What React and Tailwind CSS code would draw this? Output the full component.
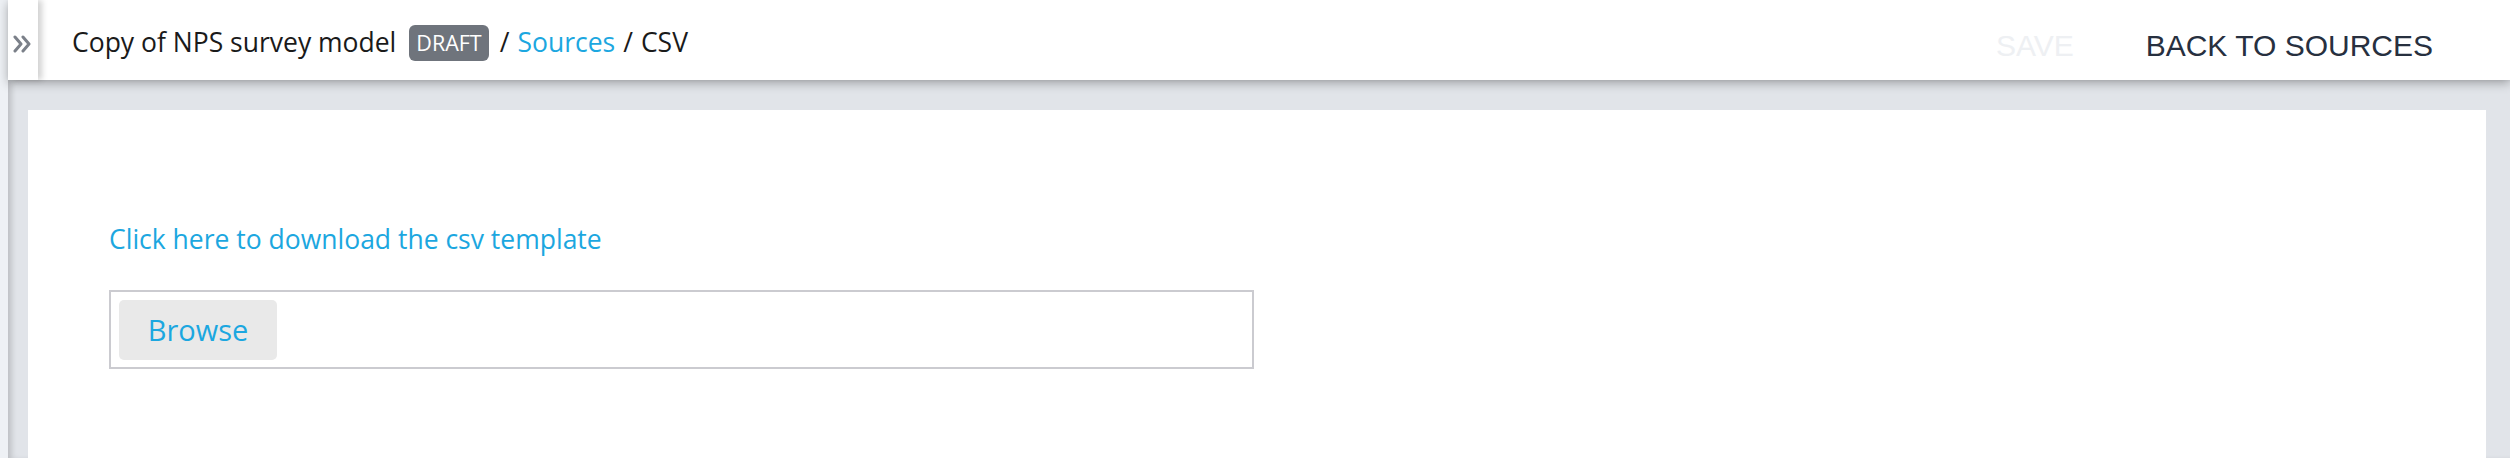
import React from "react";

export default function App() {
  const font = { fontFamily: "'Open Sans', Lato, sans-serif" };
  return (
    <div className="flex w-[2510px] h-[458px] overflow-hidden bg-[#eef1f5]" style={font}>
      <div className="w-[8px] shrink-0 bg-[#eef1f5]" />
      <div className="flex flex-1 flex-col min-w-0">
        <header className="relative z-10 flex h-[80px] shrink-0 items-center bg-white shadow-[0_3px_10px_rgba(0,0,0,0.3)]">
          <div className="relative z-10 flex h-full w-[30px] shrink-0 items-center justify-center bg-white pt-[8px] shadow-[4px_0_6px_rgba(0,0,0,0.18)]">
            <svg width="22" height="18" viewBox="0 0 22 18" fill="none" stroke="#7b8089" strokeWidth="3" strokeLinecap="round" strokeLinejoin="round">
              <polyline points="3,2 9,9 3,16" />
              <polyline points="11,2 17,9 11,16" />
            </svg>
          </div>
          <div className="flex flex-1 items-center pl-[34px] pt-[6px] text-[26.5px] text-[#1a1a1a]">
            <span>Copy of NPS survey model</span>
            <span className="ml-[13px] flex h-[36px] items-center rounded-[6px] bg-[#6f747c] px-[7px] text-[21.5px] text-white">DRAFT</span>
            <span className="ml-[11px]">/</span>
            <a className="ml-[8px] text-[#1ca7e0]">Sources</a>
            <span className="ml-[8px]">/</span>
            <span className="ml-[8px]">CSV</span>
          </div>
          <div className="flex items-center gap-[72px] pr-[77px] pt-[10px] text-[30px]" style={{ fontFamily: "'Liberation Sans', Arial, sans-serif" }}>
            <span className="text-[#eef0f3]">SAVE</span>
            <span className="text-[#27303f]">BACK TO SOURCES</span>
          </div>
        </header>
        <main className="flex flex-1 bg-[#e1e4e9] pl-[20px] pt-[30px] pr-[24px] shadow-[inset_6px_0_6px_-3px_rgba(0,0,0,0.18)]">
          <section className="flex-1 bg-white pl-[81px] pt-[114px]">
            <a className="block text-[26.5px] leading-[30px] text-[#1ca7e0]">Click here to download the csv template</a>
            <div className="mt-[36px] flex h-[79px] w-[1145px] items-center border-2 border-[#cbcbd0] px-[8px]">
              <button className="h-[60px] w-[158px] rounded-[5px] bg-[#e9e9e9] text-[29px] text-[#1ca7e0]">Browse</button>
            </div>
          </section>
        </main>
      </div>
    </div>
  );
}
